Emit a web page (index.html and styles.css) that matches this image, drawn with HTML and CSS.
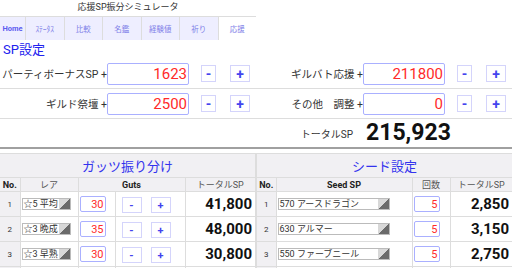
FILE: index.html
```html
<!DOCTYPE html>
<html lang="ja">
<head>
    <meta charset="UTF-8">
    <meta name="viewport" content="width=device-width, initial-scale=1.0">
    <title>応援SP振分シミュレータ</title>
    <link rel="stylesheet" href="styles.css">
</head>
<body>
    <div class="app">
        <div class="top">
            <div class="title">応援SP振分シミュレータ</div>
            <nav class="tabs">
                <a class="tab tab-home">Home</a>
                <a class="tab">ｽﾃｰﾀｽ</a>
                <a class="tab">比較</a>
                <a class="tab">名鑑</a>
                <a class="tab">経験値</a>
                <a class="tab">祈り</a>
                <a class="tab active">応援</a>
            </nav>
        </div>

        <h2 class="section-title">SP設定</h2>

        <div class="sp-row">
            <div class="sp-cell">
                <span class="sp-label">パーティボーナスSP +</span>
                <input class="sp-input" type="text" value="1623">
                <button class="btn btn-minus">-</button>
                <button class="btn btn-plus">+</button>
            </div>
            <div class="sp-cell">
                <span class="sp-label">ギルバト応援 +</span>
                <input class="sp-input" type="text" value="211800">
                <button class="btn btn-minus">-</button>
                <button class="btn btn-plus">+</button>
            </div>
        </div>
        <div class="sp-row">
            <div class="sp-cell">
                <span class="sp-label">ギルド祭壇 +</span>
                <input class="sp-input" type="text" value="2500">
                <button class="btn btn-minus">-</button>
                <button class="btn btn-plus">+</button>
            </div>
            <div class="sp-cell">
                <span class="sp-label">その他　調整 +</span>
                <input class="sp-input" type="text" value="0">
                <button class="btn btn-minus">-</button>
                <button class="btn btn-plus">+</button>
            </div>
        </div>
        <div class="total-row">
            <div class="sp-cell"></div>
            <div class="sp-cell">
                <span class="total-label">トータルSP</span>
                <span class="total-value">215,923</span>
            </div>
        </div>

        <div class="panels">
            <div class="panel">
                <table class="grid guts">
                    <colgroup>
                        <col style="width:20px"><col style="width:58px"><col style="width:37px"><col style="width:70px"><col style="width:70px">
                    </colgroup>
                    <tr><th class="caption" colspan="5">ガッツ振り分け</th></tr>
                    <tr class="head">
                        <th class="strong">No.</th><th>レア</th><th class="strong" colspan="2">Guts</th><th>トータルSP</th>
                    </tr>
                    <tr>
                        <td class="no">1</td>
                        <td><div class="pick pick-short"><span class="pick-text">☆5 平均</span><span class="pick-arrow"></span></div></td>
                        <td><input class="num" type="text" value="30"></td>
                        <td class="pm"><button class="btn-sm">-</button><button class="btn-sm">+</button></td>
                        <td class="sum">41,800</td>
                    </tr>
                    <tr>
                        <td class="no">2</td>
                        <td><div class="pick pick-short"><span class="pick-text">☆3 晩成</span><span class="pick-arrow"></span></div></td>
                        <td><input class="num" type="text" value="35"></td>
                        <td class="pm"><button class="btn-sm">-</button><button class="btn-sm">+</button></td>
                        <td class="sum">48,000</td>
                    </tr>
                    <tr>
                        <td class="no">3</td>
                        <td><div class="pick pick-short"><span class="pick-text">☆3 早熟</span><span class="pick-arrow"></span></div></td>
                        <td><input class="num" type="text" value="30"></td>
                        <td class="pm"><button class="btn-sm">-</button><button class="btn-sm">+</button></td>
                        <td class="sum">30,800</td>
                    </tr>
                    <tr>
                        <td class="no"></td><td></td>
                        <td><input class="num" type="text" value=""></td>
                        <td class="pm"></td><td></td>
                    </tr>
                </table>
            </div>
            <div class="panel">
                <table class="grid seed">
                    <colgroup>
                        <col style="width:19px"><col style="width:136px"><col style="width:38px"><col style="width:62px">
                    </colgroup>
                    <tr><th class="caption" colspan="4">シード設定</th></tr>
                    <tr class="head">
                        <th class="strong">No.</th><th class="strong">Seed SP</th><th>回数</th><th>トータルSP</th>
                    </tr>
                    <tr>
                        <td class="no">1</td>
                        <td><div class="pick pick-long"><span class="pick-text">570 アースドラゴン</span><span class="pick-arrow"></span></div></td>
                        <td><input class="num" type="text" value="5"></td>
                        <td class="sum">2,850</td>
                    </tr>
                    <tr>
                        <td class="no">2</td>
                        <td><div class="pick pick-long"><span class="pick-text">630 アルマー</span><span class="pick-arrow"></span></div></td>
                        <td><input class="num" type="text" value="5"></td>
                        <td class="sum">3,150</td>
                    </tr>
                    <tr>
                        <td class="no">3</td>
                        <td><div class="pick pick-long"><span class="pick-text">550 ファーブニール</span><span class="pick-arrow"></span></div></td>
                        <td><input class="num" type="text" value="5"></td>
                        <td class="sum">2,750</td>
                    </tr>
                    <tr>
                        <td class="no"></td><td></td>
                        <td><input class="num" type="text" value=""></td>
                        <td></td>
                    </tr>
                </table>
            </div>
        </div>
    </div>
</body>
</html>
```

FILE: styles.css
```css
body {
    margin: 0;
    font-family: Roboto, "Noto Sans CJK JP", sans-serif;
    background: #fff;
    color: #333;
}
.app {
    width: 512px;
    height: 268px;
    overflow: hidden;
}
.top {
    width: 256px;
}
.title {
    height: 16px;
    line-height: 15px;
    font-size: 9px;
    text-align: center;
    color: #333;
}
.tabs {
    display: flex;
    height: 24px;
    border-top: 1px solid #ddd;
    box-sizing: border-box;
}
.tab {
    flex: 1;
    display: flex;
    align-items: center;
    justify-content: center;
    background: #eeeeff;
    border-right: 1px solid #ddd;
    font-size: 7.5px;
    color: #7f7fe8;
}
.tab-home {
    flex: 0 0 26px;
    box-sizing: border-box;
    font-weight: bold;
    color: #5c5cf0;
}
.tab.active {
    background: #fff;
    border-right: none;
    color: #7f7fe8;
}
.section-title {
    margin: 0;
    height: 19px;
    line-height: 19px;
    padding-left: 3px;
    font-size: 13px;
    font-weight: normal;
    color: #2222ee;
}
.sp-row {
    display: flex;
    height: 29px;
    border-bottom: 1px solid #ddd;
}
.sp-cell {
    width: 256px;
    display: flex;
    align-items: center;
}
.sp-label {
    width: 107px;
    text-align: right;
    font-size: 10.5px;
    white-space: nowrap;
    color: #333;
}
.sp-input {
    width: 82px;
    height: 22px;
    box-sizing: border-box;
    border: 1px solid #aab0ff;
    border-radius: 2px;
    padding: 0 1px 0 0;
    font-family: inherit;
    font-size: 15px;
    text-align: right;
    color: #ff2a2a;
    background: #fff;
}
.btn {
    height: 17px;
    box-sizing: border-box;
    padding: 0;
    border: 1px solid #d4d4fb;
    background: #fff;
    font-family: inherit;
    font-weight: bold;
    font-size: 14px;
    line-height: 14px;
    color: #4444ee;
}
.btn-minus {
    width: 15px;
    margin-left: 12px;
}
.btn-plus {
    width: 20px;
    margin-left: 14px;
}
.total-row {
    display: flex;
    height: 28px;
    border-bottom: 2px solid #a0a0a0;
}
.total-label {
    width: 97px;
    text-align: right;
    font-size: 10px;
    color: #333;
}
.total-value {
    margin-left: 13px;
    font-size: 23px;
    font-weight: bold;
    color: #111;
    line-height: 28px;
}
.panels {
    display: flex;
    gap: 2px;
    margin-top: 4px;
    background: #ddd;
    border-top: 1px solid #ddd;
}
.panel {
    width: 255px;
    background: #f1f0f3;
}
.grid {
    width: 255px;
    border-collapse: collapse;
    table-layout: fixed;
}
.grid th,
.grid td {
    padding: 0;
    border: 1px solid #ddd;
}
.grid tr:first-child th {
    border-top: none;
}
.grid th:first-child,
.grid td:first-child {
    border-left: none;
}
.grid th:last-child,
.grid td:last-child {
    border-right: none;
}
.caption {
    height: 23px;
    font-size: 13px;
    font-weight: normal;
    color: #3333ee;
}
.head th {
    height: 13px;
    font-size: 9px;
    font-weight: normal;
    color: #555;
    line-height: 12px;
}
.head th.strong {
    font-weight: bold;
    color: #222;
}
.grid td {
    height: 24px;
    background: #fff;
}
.grid td.no {
    background: #f1f0f3;
    text-align: center;
    font-size: 8px;
    color: #333;
}
.pick {
    display: flex;
    height: 12px;
    margin-left: 1px;
    box-sizing: border-box;
    border: 1px solid #bbb;
    background: #fff;
}
.pick-short {
    width: 49px;
}
.pick-long {
    width: 112px;
}
.pick-text {
    flex: 1;
    font-size: 9px;
    line-height: 10px;
    padding-left: 1px;
    white-space: nowrap;
    overflow: hidden;
    color: #333;
}
.pick-arrow {
    width: 11px;
    background: linear-gradient(to bottom right, #d8d8d8 50%, #6a6a6a 50%);
}
.num {
    display: block;
    width: 26px;
    height: 16px;
    margin-left: 1px;
    box-sizing: border-box;
    border: 1px solid #aab0ff;
    border-radius: 2px;
    padding: 0 1px 0 0;
    font-family: inherit;
    font-size: 11px;
    text-align: right;
    color: #ff2a2a;
    background: #fff;
}
.pm {
    white-space: nowrap;
}
.btn-sm {
    width: 20px;
    height: 16px;
    box-sizing: border-box;
    padding: 0;
    margin-left: 6px;
    border: 1px solid #d4d4fb;
    background: #fff;
    font-family: inherit;
    font-size: 11px;
    font-weight: bold;
    color: #4444ee;
    vertical-align: middle;
}
.btn-sm + .btn-sm {
    margin-left: 9px;
}
.sum {
    text-align: right;
    padding-right: 3px !important;
    font-size: 15px;
    font-weight: bold;
    color: #111;
}
```
